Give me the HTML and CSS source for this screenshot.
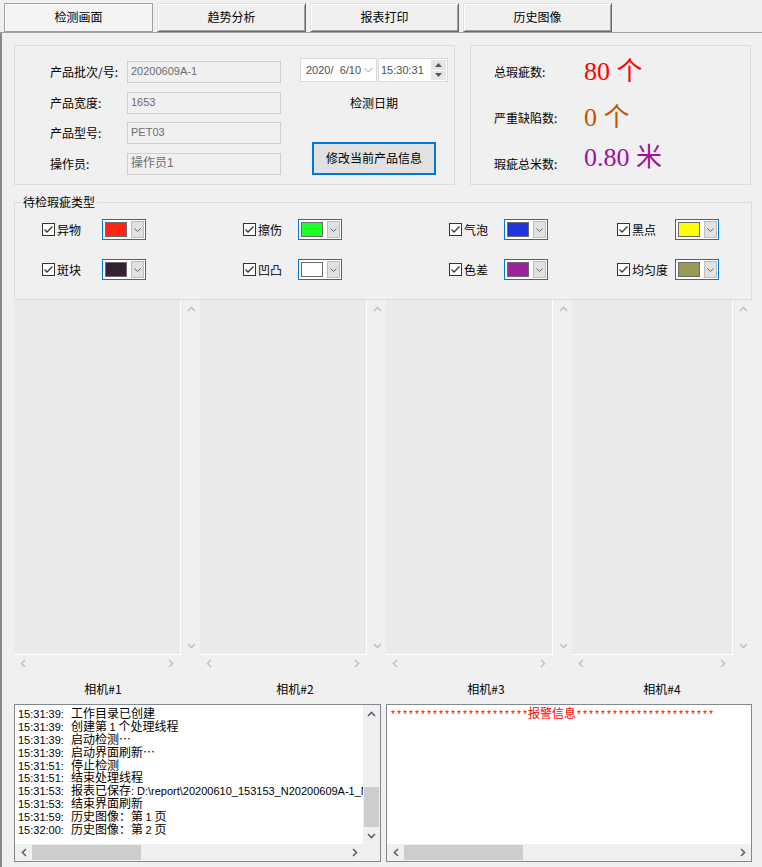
FILE: index.html
```html
<!DOCTYPE html>
<html lang="zh-CN">
<head>
<meta charset="utf-8">
<title>检测画面</title>
<link rel="stylesheet" href="styles.css">
</head>
<body>
<div class="tabs">
  <div class="tab active">检测画面</div>
  <div class="tab">趋势分析</div>
  <div class="tab">报表打印</div>
  <div class="tab">历史图像</div>
</div>
<div class="panel">
  <div class="top-row">
    <div class="info">
      <div class="form">
        <span class="lbl">产品批次/号:</span><div class="field">20200609A-1</div>
        <span class="lbl">产品宽度:</span><div class="field">1653</div>
        <span class="lbl">产品型号:</span><div class="field">PET03</div>
        <span class="lbl">操作员:</span><div class="field cjk">操作员1</div>
      </div>
      <div class="right">
        <div class="dt">
          <div class="date"><span>2020/&nbsp; 6/10</span>
            <svg class="dd" width="9" height="6" viewBox="0 0 9 6"><polyline points="0.5,1 4.5,5 8.5,1" fill="none" stroke="#9a9a9a" stroke-width="1"/></svg>
          </div>
          <div class="time"><span>15:30:31</span>
            <div class="spin">
              <div class="sb"><svg width="7" height="4" viewBox="0 0 7 4"><polygon points="0,4 3.5,0 7,4" fill="#555"/></svg></div>
              <div class="sb"><svg width="7" height="4" viewBox="0 0 7 4"><polygon points="0,0 3.5,4 7,0" fill="#555"/></svg></div>
            </div>
          </div>
        </div>
        <div class="date-label">检测日期</div>
        <div class="btn">修改当前产品信息</div>
      </div>
    </div>
    <div class="stats">
      <span class="slbl">总瑕疵数:</span><span class="val red">80 个</span>
      <span class="slbl">严重缺陷数:</span><span class="val orange">0 个</span>
      <span class="slbl">瑕疵总米数:</span><span class="val purple up">0.80 米</span>
    </div>
  </div>

  <fieldset class="types">
    <legend>待检瑕疵类型</legend>
    <div class="grid">
      <div class="item"><span class="chk"><svg width="11" height="11" viewBox="0 0 11 11"><polyline points="1.5,5.5 4,8 9.5,2.5" fill="none" stroke="#333" stroke-width="1.3"/></svg></span><span class="tname">异物</span><span class="combo"><span class="sw" style="background:#ff2414"></span><span class="cb"><svg width="7" height="4" viewBox="0 0 7 4"><polyline points="0.5,0.5 3.5,3.5 6.5,0.5" fill="none" stroke="#666" stroke-width="1"/></svg></span></span></div>
      <div class="item"><span class="chk"><svg width="11" height="11" viewBox="0 0 11 11"><polyline points="1.5,5.5 4,8 9.5,2.5" fill="none" stroke="#333" stroke-width="1.3"/></svg></span><span class="tname">擦伤</span><span class="combo"><span class="sw" style="background:#1eff24"></span><span class="cb"><svg width="7" height="4" viewBox="0 0 7 4"><polyline points="0.5,0.5 3.5,3.5 6.5,0.5" fill="none" stroke="#666" stroke-width="1"/></svg></span></span></div>
      <div class="item"><span class="chk"><svg width="11" height="11" viewBox="0 0 11 11"><polyline points="1.5,5.5 4,8 9.5,2.5" fill="none" stroke="#333" stroke-width="1.3"/></svg></span><span class="tname">气泡</span><span class="combo"><span class="sw" style="background:#2234dc"></span><span class="cb"><svg width="7" height="4" viewBox="0 0 7 4"><polyline points="0.5,0.5 3.5,3.5 6.5,0.5" fill="none" stroke="#666" stroke-width="1"/></svg></span></span></div>
      <div class="item"><span class="chk"><svg width="11" height="11" viewBox="0 0 11 11"><polyline points="1.5,5.5 4,8 9.5,2.5" fill="none" stroke="#333" stroke-width="1.3"/></svg></span><span class="tname">黑点</span><span class="combo"><span class="sw" style="background:#ffff00"></span><span class="cb"><svg width="7" height="4" viewBox="0 0 7 4"><polyline points="0.5,0.5 3.5,3.5 6.5,0.5" fill="none" stroke="#666" stroke-width="1"/></svg></span></span></div>
      <div class="item"><span class="chk"><svg width="11" height="11" viewBox="0 0 11 11"><polyline points="1.5,5.5 4,8 9.5,2.5" fill="none" stroke="#333" stroke-width="1.3"/></svg></span><span class="tname">斑块</span><span class="combo"><span class="sw" style="background:#352335"></span><span class="cb"><svg width="7" height="4" viewBox="0 0 7 4"><polyline points="0.5,0.5 3.5,3.5 6.5,0.5" fill="none" stroke="#666" stroke-width="1"/></svg></span></span></div>
      <div class="item"><span class="chk"><svg width="11" height="11" viewBox="0 0 11 11"><polyline points="1.5,5.5 4,8 9.5,2.5" fill="none" stroke="#333" stroke-width="1.3"/></svg></span><span class="tname">凹凸</span><span class="combo"><span class="sw" style="background:#ffffff"></span><span class="cb"><svg width="7" height="4" viewBox="0 0 7 4"><polyline points="0.5,0.5 3.5,3.5 6.5,0.5" fill="none" stroke="#666" stroke-width="1"/></svg></span></span></div>
      <div class="item"><span class="chk"><svg width="11" height="11" viewBox="0 0 11 11"><polyline points="1.5,5.5 4,8 9.5,2.5" fill="none" stroke="#333" stroke-width="1.3"/></svg></span><span class="tname">色差</span><span class="combo"><span class="sw" style="background:#9c229c"></span><span class="cb"><svg width="7" height="4" viewBox="0 0 7 4"><polyline points="0.5,0.5 3.5,3.5 6.5,0.5" fill="none" stroke="#666" stroke-width="1"/></svg></span></span></div>
      <div class="item"><span class="chk"><svg width="11" height="11" viewBox="0 0 11 11"><polyline points="1.5,5.5 4,8 9.5,2.5" fill="none" stroke="#333" stroke-width="1.3"/></svg></span><span class="tname">均匀度</span><span class="combo"><span class="sw" style="background:#9a9a55"></span><span class="cb"><svg width="7" height="4" viewBox="0 0 7 4"><polyline points="0.5,0.5 3.5,3.5 6.5,0.5" fill="none" stroke="#666" stroke-width="1"/></svg></span></span></div>
    </div>
  </fieldset>

  <div class="cams">
    <div class="cam">
      <div class="img"></div>
      <div class="vs"><svg width="9" height="6" viewBox="0 0 9 6"><polyline points="1,5 4.5,1.5 8,5" fill="none" stroke="#c2c2c2" stroke-width="1.6"/></svg><svg width="9" height="6" viewBox="0 0 9 6"><polyline points="1,1 4.5,4.5 8,1" fill="none" stroke="#c2c2c2" stroke-width="1.6"/></svg></div>
      <div class="hs"><svg width="6" height="9" viewBox="0 0 6 9"><polyline points="5,1 1.5,4.5 5,8" fill="none" stroke="#c2c2c2" stroke-width="1.6"/></svg><svg width="6" height="9" viewBox="0 0 6 9"><polyline points="1,1 4.5,4.5 1,8" fill="none" stroke="#c2c2c2" stroke-width="1.6"/></svg></div>
    </div>
    <div class="cam">
      <div class="img"></div>
      <div class="vs"><svg width="9" height="6" viewBox="0 0 9 6"><polyline points="1,5 4.5,1.5 8,5" fill="none" stroke="#c2c2c2" stroke-width="1.6"/></svg><svg width="9" height="6" viewBox="0 0 9 6"><polyline points="1,1 4.5,4.5 8,1" fill="none" stroke="#c2c2c2" stroke-width="1.6"/></svg></div>
      <div class="hs"><svg width="6" height="9" viewBox="0 0 6 9"><polyline points="5,1 1.5,4.5 5,8" fill="none" stroke="#c2c2c2" stroke-width="1.6"/></svg><svg width="6" height="9" viewBox="0 0 6 9"><polyline points="1,1 4.5,4.5 1,8" fill="none" stroke="#c2c2c2" stroke-width="1.6"/></svg></div>
    </div>
    <div class="cam">
      <div class="img"></div>
      <div class="vs"><svg width="9" height="6" viewBox="0 0 9 6"><polyline points="1,5 4.5,1.5 8,5" fill="none" stroke="#c2c2c2" stroke-width="1.6"/></svg><svg width="9" height="6" viewBox="0 0 9 6"><polyline points="1,1 4.5,4.5 8,1" fill="none" stroke="#c2c2c2" stroke-width="1.6"/></svg></div>
      <div class="hs"><svg width="6" height="9" viewBox="0 0 6 9"><polyline points="5,1 1.5,4.5 5,8" fill="none" stroke="#c2c2c2" stroke-width="1.6"/></svg><svg width="6" height="9" viewBox="0 0 6 9"><polyline points="1,1 4.5,4.5 1,8" fill="none" stroke="#c2c2c2" stroke-width="1.6"/></svg></div>
    </div>
    <div class="cam">
      <div class="img"></div>
      <div class="vs"><svg width="9" height="6" viewBox="0 0 9 6"><polyline points="1,5 4.5,1.5 8,5" fill="none" stroke="#c2c2c2" stroke-width="1.6"/></svg><svg width="9" height="6" viewBox="0 0 9 6"><polyline points="1,1 4.5,4.5 8,1" fill="none" stroke="#c2c2c2" stroke-width="1.6"/></svg></div>
      <div class="hs"><svg width="6" height="9" viewBox="0 0 6 9"><polyline points="5,1 1.5,4.5 5,8" fill="none" stroke="#c2c2c2" stroke-width="1.6"/></svg><svg width="6" height="9" viewBox="0 0 6 9"><polyline points="1,1 4.5,4.5 1,8" fill="none" stroke="#c2c2c2" stroke-width="1.6"/></svg></div>
    </div>
  </div>

  <div class="cam-labels">
    <span class="c1">相机#1</span>
    <span class="c2">相机#2</span>
    <span class="c3">相机#3</span>
    <span class="c4">相机#4</span>
  </div>

  <div class="logs">
    <div class="box log">
      <div class="text">
        <div class="ln"><span class="tm">15:31:39:</span>工作目录已创建</div>
        <div class="ln"><span class="tm">15:31:39:</span>创建第 <span class="lat">1</span> 个处理线程</div>
        <div class="ln"><span class="tm">15:31:39:</span>启动检测…</div>
        <div class="ln"><span class="tm">15:31:39:</span>启动界面刷新…</div>
        <div class="ln"><span class="tm">15:31:51:</span>停止检测</div>
        <div class="ln"><span class="tm">15:31:51:</span>结束处理线程</div>
        <div class="ln"><span class="tm">15:31:53:</span>报表已保存<span class="lat">: D:\report\20200610_153153_N20200609A-1_N20200609A-1.xls</span></div>
        <div class="ln"><span class="tm">15:31:53:</span>结束界面刷新</div>
        <div class="ln"><span class="tm">15:31:59:</span>历史图像：第 <span class="lat">1</span> 页</div>
        <div class="ln"><span class="tm">15:32:00:</span>历史图像：第 <span class="lat">2</span> 页</div>
      </div>
      <div class="vbar">
        <div class="arr"><svg width="9" height="6" viewBox="0 0 9 6"><polyline points="1,5 4.5,1.5 8,5" fill="none" stroke="#606060" stroke-width="1.6"/></svg></div>
        <div class="track"><div class="vthumb"></div></div>
        <div class="arr"><svg width="9" height="6" viewBox="0 0 9 6"><polyline points="1,1 4.5,4.5 8,1" fill="none" stroke="#606060" stroke-width="1.6"/></svg></div>
      </div>
      <div class="hbar">
        <div class="arr"><svg width="6" height="9" viewBox="0 0 6 9"><polyline points="5,1 1.5,4.5 5,8" fill="none" stroke="#606060" stroke-width="1.6"/></svg></div>
        <div class="htrack"><div class="hthumb log-thumb"></div></div>
        <div class="arr"><svg width="6" height="9" viewBox="0 0 6 9"><polyline points="1,1 4.5,4.5 1,8" fill="none" stroke="#606060" stroke-width="1.6"/></svg></div>
      </div>
      <div class="corner"></div>
    </div>
    <div class="box alarm">
      <div class="atext"><span class="stars">***********************</span><span class="aw">报警信息</span><span class="stars">***********************</span></div>
      <div class="hbar">
        <div class="arr"><svg width="6" height="9" viewBox="0 0 6 9"><polyline points="5,1 1.5,4.5 5,8" fill="none" stroke="#606060" stroke-width="1.6"/></svg></div>
        <div class="htrack"><div class="hthumb alarm-thumb"></div></div>
        <div class="arr"><svg width="6" height="9" viewBox="0 0 6 9"><polyline points="1,1 4.5,4.5 1,8" fill="none" stroke="#606060" stroke-width="1.6"/></svg></div>
      </div>
    </div>
  </div>
</div>
</body>
</html>
```
FILE: styles.css
```css
* { box-sizing: border-box; }
html, body { margin: 0; padding: 0; }
body {
  width: 762px;
  height: 867px;
  overflow: hidden;
  background: #f0f0f0;
  font-family: "Liberation Sans", "Noto Sans CJK SC", sans-serif;
  font-size: 12px;
  color: #000;
}

/* tabs */
.tabs {
  display: flex;
  gap: 4px;
  height: 33px;
  padding: 3px 0 0 4px;
  border-bottom: 1px solid #a0a0a0;
}
.tab {
  width: 149px;
  height: 29px;
  line-height: 26px;
  text-align: center;
  font-family: "Noto Sans CJK SC", sans-serif;
  font-size: 12px;
  background: #f0f0f0;
  border: 1px solid;
  border-color: #e3e3e3 #696969 #696969 #e3e3e3;
  box-shadow: inset 1px 1px 0 #fff, inset -1px -1px 0 #a0a0a0;
}
.tab.active {
  border-color: #a0a0a0;
  box-shadow: inset 1px 1px 0 #fff;
  background: conic-gradient(#fbfbfb 25%, #ececec 0 50%, #fbfbfb 0 75%, #ececec 0) 0 0 / 2px 2px;
}

/* panel */
.panel {
  height: 834px;
  border-left: 2px solid #8a8a8a;
  padding: 12px 0 0 12px;
}
.top-row {
  display: flex;
  gap: 15px;
  height: 140px;
}
.info {
  width: 441px;
  height: 140px;
  border: 1px solid #dcdcdc;
  display: flex;
  align-items: flex-start;
  padding: 12px 0 0 35px;
}
.form {
  margin-top: 3px;
  display: grid;
  grid-template-columns: 77px 154px;
  grid-auto-rows: 22px;
  row-gap: 8.7px;
  align-items: center;
}
.lbl, .slbl {
  font-family: "Noto Sans CJK SC", sans-serif;
  font-size: 12px;
  line-height: 14px;
}
.field {
  height: 22px;
  border: 1px solid #cfcfcf;
  background: #f0f0f0;
  color: #6d6d6d;
  font-size: 11px;
  line-height: 19px;
  padding-left: 3px;
}
.field.cjk {
  font-size: 12px;
}
.right {
  margin-left: 19px;
  width: 148px;
  display: flex;
  flex-direction: column;
  align-items: center;
}
.dt {
  display: flex;
  gap: 1px;
}
.date, .time {
  height: 24px;
  background: #fff;
  border: 1px solid #dadada;
  display: flex;
  align-items: center;
  font-size: 11px;
  color: #505050;
  padding-left: 5px;
  white-space: nowrap;
}
.date { width: 77px; justify-content: space-between; padding-right: 3px; }
.time { width: 70px; padding-left: 2px; justify-content: space-between; padding-right: 1px; }
.spin {
  width: 15px;
  height: 20px;
  display: flex;
  flex-direction: column;
  gap: 1px;
}
.sb {
  flex: 1;
  background: #e6e6e6;
  display: flex;
  align-items: center;
  justify-content: center;
}
.date-label {
  margin-top: 14px;
  font-family: "Noto Sans CJK SC", sans-serif;
  line-height: 14px;
}
.btn {
  margin-top: 32px;
  width: 124px;
  height: 33px;
  border: 2px solid #0078d7;
  background: #e1e1e1;
  text-align: center;
  line-height: 28px;
  font-family: "Noto Sans CJK SC", sans-serif;
}

.stats {
  width: 281px;
  height: 140px;
  border: 1px solid #dcdcdc;
  padding: 3px 0 0 23px;
  display: grid;
  grid-template-columns: 90px auto;
  grid-auto-rows: 46px;
  align-items: center;
  align-content: start;
}
.val {
  font-family: "Liberation Serif", "Noto Sans CJK SC", serif;
  font-size: 26px;
  line-height: 30px;
  white-space: nowrap;
}
.val.up { margin-top: -12px; }
.red { color: #ff0000; }
.orange { color: #c25406; }
.purple { color: #a0119e; }

/* defect types */
.types {
  margin: 10px 0 0 0;
  width: 738px;
  border: 1px solid #dcdcdc;
  padding: 10px 0 19px 27px;
  min-inline-size: 0;
}
.types legend {
  margin-left: -21px;
  padding: 0 2px;
  font-family: "Noto Sans CJK SC", sans-serif;
  font-size: 12px;
  line-height: 14px;
}
.grid {
  display: grid;
  grid-template-columns: 201px 206px 168px auto;
  grid-auto-rows: 21px;
  row-gap: 19px;
}
.item {
  display: flex;
  align-items: center;
}
.chk {
  width: 13px;
  height: 13px;
  border: 1px solid #333;
  background: #fff;
  display: flex;
  align-items: center;
  justify-content: center;
}
.tname {
  width: 42px;
  padding-left: 2px;
  font-family: "Noto Sans CJK SC", sans-serif;
  line-height: 14px;
}
.item:nth-child(4n+1) .tname { width: 47px; }
.item:nth-child(4n) .tname { width: 45px; }
.combo {
  width: 44px;
  height: 21px;
  border: 1px solid #0078d7;
  background: #fff;
  padding: 1px;
  display: flex;
}
.sw {
  width: 23px;
  margin: 1px 4px 1px 1px;
  border: 1px solid #6b6b6b;
}
.cb {
  width: 13px;
  background: #e1e1e1;
  border: 1px solid #bdbdbd;
  display: flex;
  align-items: center;
  justify-content: center;
}

/* cameras */
.cams {
  width: 738px;
  height: 371px;
  display: grid;
  grid-template-columns: 186px 186px 186px 180px;
}
.cam {
  display: grid;
  grid-template-columns: 1fr 20px;
  grid-template-rows: 355px 16px;
}
.img {
  background: #eaeaea;
  border-bottom: 1px solid #fff;
}
.vs {
  border-left: 1px solid #fff;
  display: flex;
  flex-direction: column;
  justify-content: space-between;
  align-items: center;
  padding: 6px 0 6px 1px;
}
.hs {
  display: flex;
  justify-content: space-between;
  align-items: center;
  padding: 0 6px 0 6px;
}
.cam-labels {
  width: 738px;
  height: 33px;
  display: grid;
  grid-template-columns: 186px 186px 186px 180px;
  padding-top: 11px;
  line-height: 14px;
  font-family: "Noto Sans CJK SC", sans-serif;
  text-align: center;
}
.cam-labels .c1 { padding-right: 8px; }
.cam-labels .c2 { padding-left: 4px; }
.cam-labels .c3 { padding-left: 14px; }

/* logs */
.logs {
  display: flex;
  gap: 5px;
  height: 158px;
}
.box {
  border: 1px solid #828790;
  background: #fff;
  display: grid;
}
.log {
  width: 367px;
  grid-template-columns: 1fr 17px;
  grid-template-rows: 1fr 17px;
}
.text {
  padding: 1px 0 0 3px;
  overflow: hidden;
  white-space: nowrap;
  font-family: "Noto Sans CJK SC", sans-serif;
  font-size: 12px;
  line-height: 13px;
}
.ln {
  height: 12.9px;
  line-height: 13px;
}
.tm {
  font-family: "Liberation Sans", sans-serif;
  font-size: 11px;
  margin-right: 7px;
}
.lat {
  font-family: "Liberation Sans", sans-serif;
  font-size: 11px;
}
.vbar {
  background: #f0f0f0;
  display: flex;
  flex-direction: column;
}
.arr {
  width: 17px;
  height: 17px;
  flex: none;
  display: flex;
  align-items: center;
  justify-content: center;
}
.track { flex: 1; padding: 65px 1px 0 1px; }
.vthumb { height: 40px; background: #cdcdcd; }
.hbar {
  background: #f0f0f0;
  display: flex;
}
.htrack { flex: 1; padding: 1px 0; }
.hthumb { height: 15px; background: #cdcdcd; }
.log-thumb { width: 109px; }
.alarm-thumb { width: 119px; }
.corner { background: #f0f0f0; }

.alarm {
  width: 366px;
  grid-template-rows: 1fr 17px;
}
.atext {
  padding: 1px 0 0 3px;
  white-space: nowrap;
  overflow: hidden;
  color: #ff0000;
  line-height: 13px;
}
.stars {
  font-family: "Liberation Mono", monospace;
  font-size: 10px;
}
.aw {
  font-family: "Noto Sans CJK SC", sans-serif;
  font-size: 12px;
}
```
